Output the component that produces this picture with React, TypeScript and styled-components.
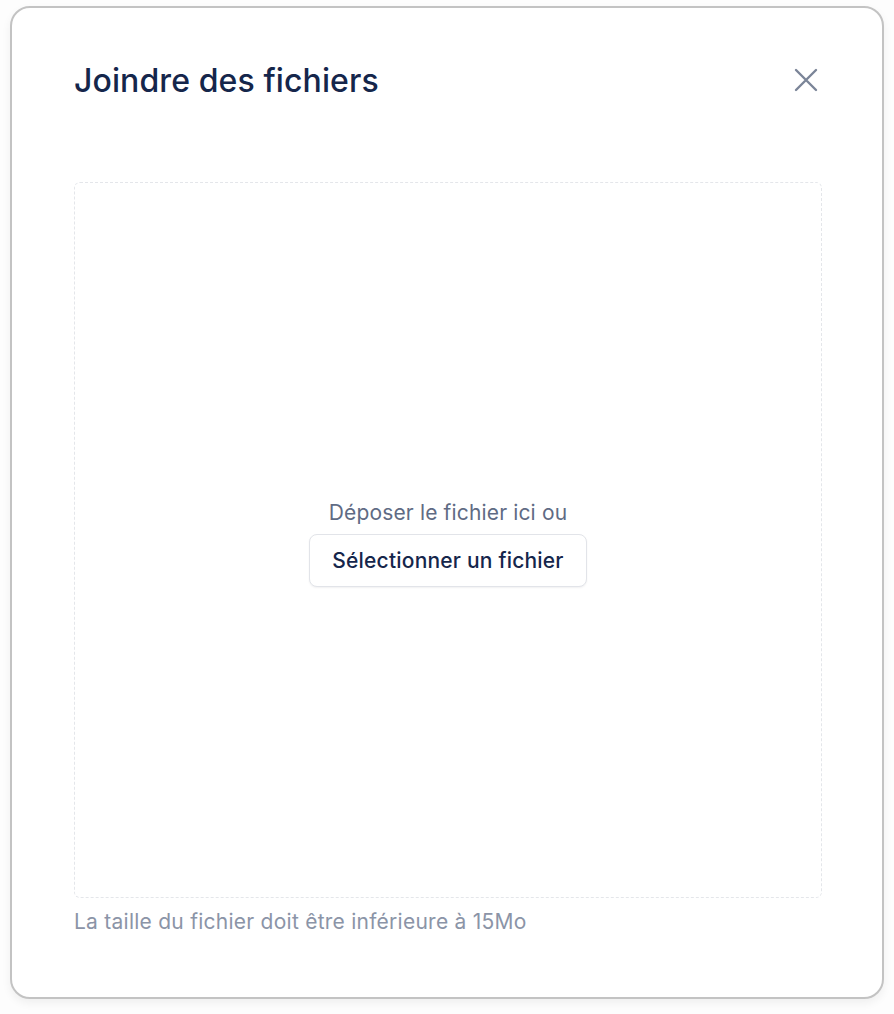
import React from "react";
import styled, { createGlobalStyle } from "styled-components";

const GlobalStyle = createGlobalStyle`
  * { box-sizing: border-box; }
  body {
    margin: 0;
    background: #fdfdfd;
    font-family: Inter, "Noto Sans", sans-serif;
  }
`;

const Page = styled.div`
  padding: 6px 10px 15px;
`;

const Modal = styled.div`
  display: flex;
  flex-direction: column;
  height: 993px;
  background: #ffffff;
  border: 2px solid #c3c3c3;
  border-radius: 20px;
  box-shadow: 0 4px 10px rgba(0, 0, 0, 0.06);
  padding: 50px 60px 0 62px;
`;

const Header = styled.div`
  display: flex;
  align-items: center;
  justify-content: space-between;
  height: 44px;
`;

const Title = styled.h2`
  margin: 0;
  font-size: 32px;
  font-weight: 500;
  color: #15264b;
  letter-spacing: 0.1px;
`;

const CloseButton = styled.button`
  display: flex;
  align-items: center;
  justify-content: center;
  width: 24px;
  height: 24px;
  padding: 0;
  margin-right: 4px;
  border: none;
  background: none;
  cursor: pointer;
`;

const DropZone = styled.div`
  display: flex;
  flex-direction: column;
  align-items: center;
  justify-content: center;
  gap: 7px;
  height: 716px;
  margin-top: 80px;
  padding-top: 6px;
  border: 1px dashed #e4e6ea;
  border-radius: 6px;
`;

const Hint = styled.span`
  font-size: 21px;
  line-height: 28px;
  letter-spacing: 0.15px;
  color: #5f6b84;
`;

const SelectButton = styled.button`
  height: 53px;
  padding: 0 22px;
  font-family: inherit;
  font-size: 21px;
  font-weight: 500;
  letter-spacing: 0.2px;
  color: #15264b;
  background: #ffffff;
  border: 1px solid #e2e4e9;
  border-radius: 8px;
  box-shadow: 0 1px 2px rgba(16, 24, 40, 0.06);
  cursor: pointer;
`;

const Note = styled.p`
  margin: 10px 0 0;
  font-size: 21px;
  line-height: 28px;
  letter-spacing: 0.25px;
  color: #8b94a7;
`;

export default function App() {
  return (
    <>
      <GlobalStyle />
      <Page>
        <Modal>
          <Header>
            <Title>Joindre des fichiers</Title>
            <CloseButton aria-label="Fermer">
              <svg width="24" height="24" viewBox="0 0 24 24" fill="none">
                <path
                  d="M2 2L22 22M22 2L2 22"
                  stroke="#7b8598"
                  strokeWidth="2.4"
                  strokeLinecap="round"
                />
              </svg>
            </CloseButton>
          </Header>
          <DropZone>
            <Hint>Déposer le fichier ici ou</Hint>
            <SelectButton>Sélectionner un fichier</SelectButton>
          </DropZone>
          <Note>La taille du fichier doit être inférieure à 15Mo</Note>
        </Modal>
      </Page>
    </>
  );
}
